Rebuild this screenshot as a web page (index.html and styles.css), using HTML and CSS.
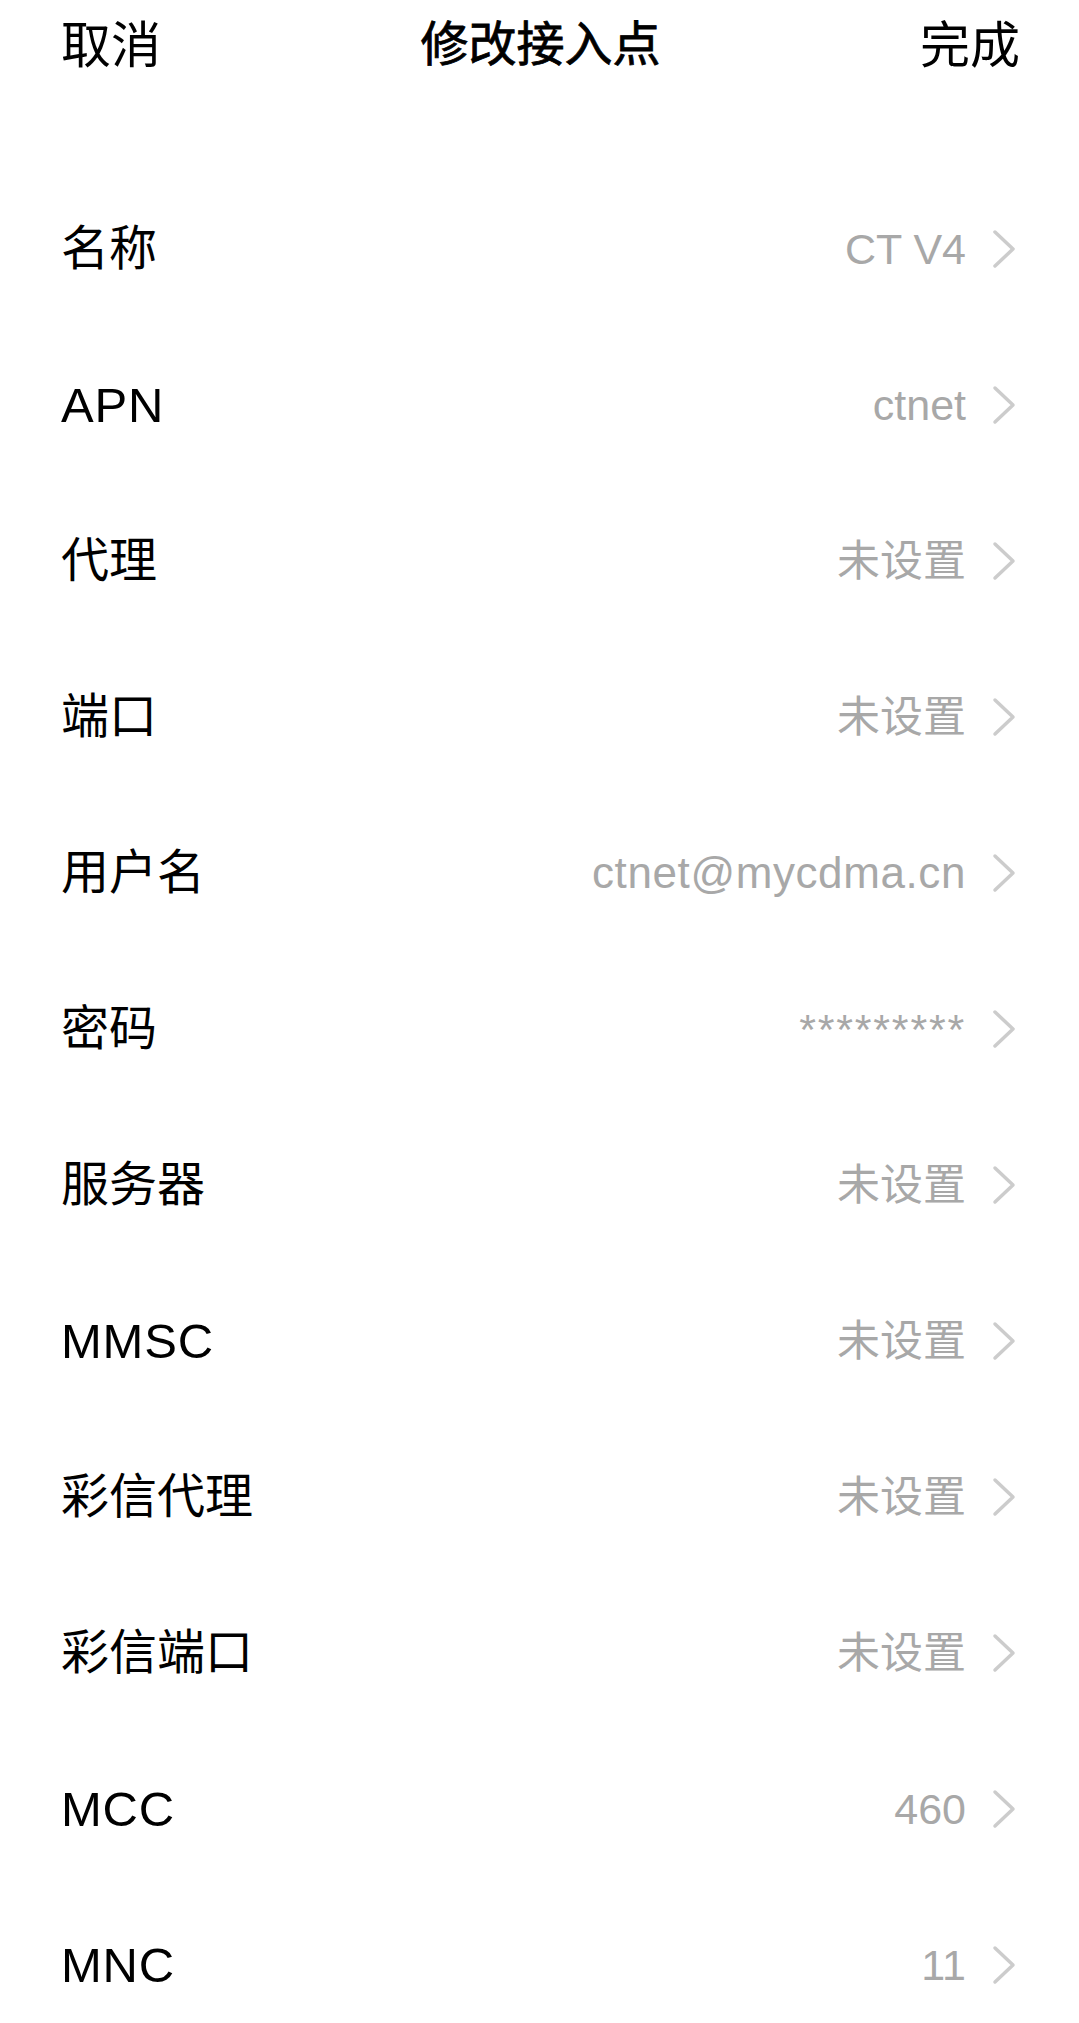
FILE: index.html
```html
<!DOCTYPE html>
<html lang="zh-CN">
<head>
<meta charset="utf-8">
<title>修改接入点</title>
<link rel="stylesheet" href="styles.css">
</head>
<body>
<div class="page">
  <header class="nav">
    <span class="nav-btn">取消</span>
    <span class="nav-title">修改接入点</span>
    <span class="nav-btn">完成</span>
  </header>
  <ul class="list">
    <li class="row"><span class="label">名称</span><span class="right"><span class="value">CT V4</span><svg class="chev" viewBox="0 0 24 40"><polyline points="3,3 21,20 3,37"/></svg></span></li>
    <li class="row"><span class="label latin">APN</span><span class="right"><span class="value">ctnet</span><svg class="chev" viewBox="0 0 24 40"><polyline points="3,3 21,20 3,37"/></svg></span></li>
    <li class="row"><span class="label">代理</span><span class="right"><span class="value">未设置</span><svg class="chev" viewBox="0 0 24 40"><polyline points="3,3 21,20 3,37"/></svg></span></li>
    <li class="row"><span class="label">端口</span><span class="right"><span class="value">未设置</span><svg class="chev" viewBox="0 0 24 40"><polyline points="3,3 21,20 3,37"/></svg></span></li>
    <li class="row"><span class="label">用户名</span><span class="right"><span class="value latin-val">ctnet@mycdma.cn</span><svg class="chev" viewBox="0 0 24 40"><polyline points="3,3 21,20 3,37"/></svg></span></li>
    <li class="row"><span class="label">密码</span><span class="right"><span class="value stars">*********</span><svg class="chev" viewBox="0 0 24 40"><polyline points="3,3 21,20 3,37"/></svg></span></li>
    <li class="row"><span class="label">服务器</span><span class="right"><span class="value">未设置</span><svg class="chev" viewBox="0 0 24 40"><polyline points="3,3 21,20 3,37"/></svg></span></li>
    <li class="row"><span class="label latin">MMSC</span><span class="right"><span class="value">未设置</span><svg class="chev" viewBox="0 0 24 40"><polyline points="3,3 21,20 3,37"/></svg></span></li>
    <li class="row"><span class="label">彩信代理</span><span class="right"><span class="value">未设置</span><svg class="chev" viewBox="0 0 24 40"><polyline points="3,3 21,20 3,37"/></svg></span></li>
    <li class="row"><span class="label">彩信端口</span><span class="right"><span class="value">未设置</span><svg class="chev" viewBox="0 0 24 40"><polyline points="3,3 21,20 3,37"/></svg></span></li>
    <li class="row"><span class="label latin">MCC</span><span class="right"><span class="value">460</span><svg class="chev" viewBox="0 0 24 40"><polyline points="3,3 21,20 3,37"/></svg></span></li>
    <li class="row"><span class="label latin">MNC</span><span class="right"><span class="value">11</span><svg class="chev" viewBox="0 0 24 40"><polyline points="3,3 21,20 3,37"/></svg></span></li>
  </ul>
</div>
</body>
</html>
```

FILE: styles.css
```css
html, body {
  margin: 0;
  padding: 0;
  background: #ffffff;
}

body {
  font-family: "Liberation Sans", "Noto Sans CJK SC", sans-serif;
  color: #000000;
}

.page {
  width: 1079px;
  height: 2023px;
  overflow: hidden;
}

.nav {
  height: 90px;
  display: flex;
  align-items: center;
  justify-content: space-between;
  padding: 0 59px 0 61px;
}

.nav-btn {
  font-size: 50px;
  line-height: 1;
  padding-top: 2px;
}

.nav-title {
  font-size: 48px;
  line-height: 1;
  font-weight: 400;
  -webkit-text-stroke: 0.8px #000;
}

.list {
  list-style: none;
  margin: 0;
  padding: 81px 0 0 0;
}

.row {
  height: 156px;
  display: flex;
  align-items: center;
  justify-content: space-between;
  padding: 0 63px 0 61px;
}

.label {
  font-size: 48px;
  line-height: 1;
}

.label.latin {
  letter-spacing: 0.8px;
  font-size: 49px;
}

.right {
  display: flex;
  align-items: center;
  gap: 26px;
}

.value {
  font-size: 43px;
  line-height: 1;
  color: #a8a8a8;
}

.value.latin-val {
  font-size: 44px;
  letter-spacing: 0.6px;
}

.value.stars {
  letter-spacing: 1.8px;
}

.chev {
  width: 24px;
  height: 40px;
  display: block;
}

.chev polyline {
  fill: none;
  stroke: #cccccc;
  stroke-width: 3.5;
  stroke-linecap: round;
  stroke-linejoin: round;
}
```
